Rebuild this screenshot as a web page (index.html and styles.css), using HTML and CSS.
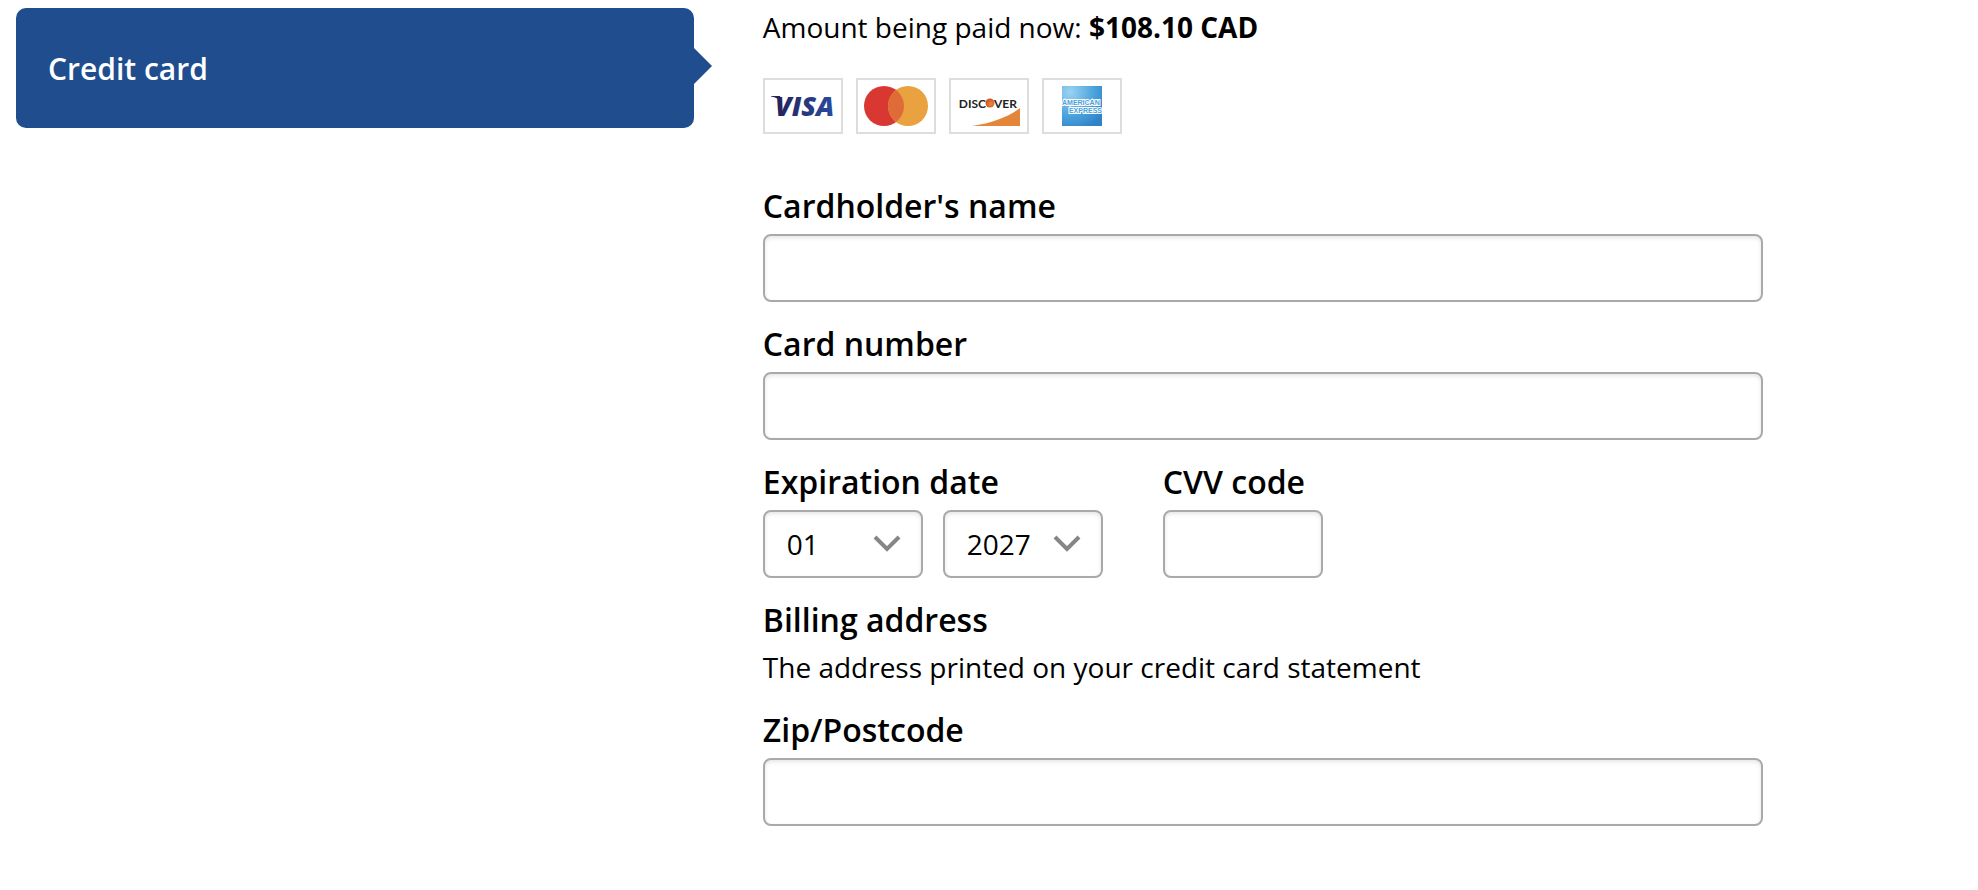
FILE: index.html
```
<!DOCTYPE html>
<html lang="en">
<head>
  <meta charset="UTF-8">
  <meta name="viewport" content="width=device-width, initial-scale=1">
  <title>Payment</title>
  <link rel="stylesheet" href="styles.css">
</head>
<body>
  <main class="payment">
    <nav class="methods">
      <button type="button" class="method-tab">Credit card</button>
    </nav>

    <form class="card-form">
      <p class="amount">Amount being paid now: <strong>$108.10 CAD</strong></p>

      <ul class="card-types">
        <li>
          <svg viewBox="0 0 76 52" role="img" aria-label="Visa">
            <defs>
              <linearGradient id="visaBlue" x1="0" y1="0" x2="1" y2="0">
                <stop offset="0" stop-color="#25215a"/>
                <stop offset="1" stop-color="#2a4b9f"/>
              </linearGradient>
            </defs>
            <path d="M6 16h9l2 6c-3-3-6-4.500-11-5.500z" fill="#25215a"/>
            <text x="10" y="36" class="visa-text" fill="url(#visaBlue)">VISA</text>
          </svg>
        </li>
        <li>
          <svg viewBox="0 0 76 52" role="img" aria-label="Mastercard">
            <circle cx="26" cy="26" r="20" fill="#d93832"/>
            <circle cx="50" cy="26" r="20" fill="#e9a23f"/>
            <path d="M38 10a20 20 0 0 1 0 32a20 20 0 0 1 0-32z" fill="#df6b38"/>
          </svg>
        </li>
        <li>
          <svg viewBox="0 0 76 52" role="img" aria-label="Discover">
            <defs>
              <radialGradient id="discoverDot" cx="0.6" cy="0.6" r="0.6">
                <stop offset="0" stop-color="#f08a36"/>
                <stop offset="1" stop-color="#cf4f27"/>
              </radialGradient>
            </defs>
            <text x="35" y="28" class="discover-text" text-anchor="end">DISC</text>
            <circle cx="39" cy="23" r="4.500" fill="url(#discoverDot)"/>
            <text x="43" y="28" class="discover-text">VER</text>
            <path d="M21 46c20-3 36-9 48-18v18z" fill="#e48639"/>
          </svg>
        </li>
        <li>
          <svg viewBox="0 0 76 52" role="img" aria-label="American Express">
            <defs>
              <radialGradient id="amexBlue" cx="0.2" cy="0.15" r="1">
                <stop offset="0" stop-color="#9bd3f2"/>
                <stop offset="0.6" stop-color="#4aa3dc"/>
                <stop offset="1" stop-color="#3181c6"/>
              </radialGradient>
            </defs>
            <rect x="18" y="6" width="40" height="40" fill="url(#amexBlue)"/>
            <text x="18" y="25" class="amex-text">AMERICAN</text>
            <text x="58" y="33" class="amex-text" text-anchor="end">EXPRESS</text>
          </svg>
        </li>
      </ul>

      <div class="field">
        <label for="cardName">Cardholder's name</label>
        <input type="text" id="cardName" autocomplete="cc-name">
      </div>

      <div class="field">
        <label for="cardNumber">Card number</label>
        <input type="text" id="cardNumber" inputmode="numeric" autocomplete="cc-number">
      </div>

      <div class="field-row">
        <div class="field">
          <label for="expMonth">Expiration date</label>
          <div class="expiry">
            <select id="expMonth">
              <option>01</option>
              <option>02</option>
              <option>03</option>
            </select>
            <select id="expYear" aria-label="Expiration year">
              <option>2027</option>
              <option>2028</option>
              <option>2029</option>
            </select>
          </div>
        </div>
        <div class="field cvv">
          <label for="cvv">CVV code</label>
          <input type="text" id="cvv" inputmode="numeric" maxlength="4">
        </div>
      </div>

      <h2>Billing address</h2>
      <p class="hint">The address printed on your credit card statement</p>

      <div class="field">
        <label for="zip">Zip/Postcode</label>
        <input type="text" id="zip" autocomplete="postal-code">
      </div>
    </form>
  </main>
</body>
</html>
```
FILE: styles.css
```
* {
  box-sizing: border-box;
}
body {
  margin: 0;
  font-family: "Open Sans", sans-serif;
  font-size: 28px;
  line-height: 38px;
  color: #000;
  background: #fff;
}
p, h2, ul {
  margin: 0;
}
.payment {
  display: grid;
  grid-template-columns: 13fr 23fr;
  column-gap: 69px;
  align-items: start;
  padding: 8px 16px;
}

/* Payment method tab */
.method-tab {
  position: relative;
  display: block;
  width: 100%;
  height: 120px;
  padding: 2px 32px 0;
  border: none;
  border-radius: 10px;
  background: #204d8d;
  color: #fff;
  font: 600 30px/40px "Open Sans", sans-serif;
  text-align: left;
  cursor: pointer;
}
.method-tab::after {
  content: "";
  position: absolute;
  top: 40px;
  left: 100%;
  border: 18px solid transparent;
  border-left-color: #204d8d;
  border-right-width: 0;
}

/* Accepted cards */
.card-types {
  display: flex;
  gap: 13px;
  margin: 32px 0 50px;
  padding: 0;
  list-style: none;
}
.card-types li {
  width: 80px;
  height: 56px;
  border: 2px solid #ddd;
}
.card-types svg {
  display: block;
}
.visa-text {
  font: italic 800 27px "Open Sans", sans-serif;
}
.discover-text {
  font: 700 12px Lato, sans-serif;
  fill: #222;
}
.amex-text {
  font: 700 7px "Liberation Sans", sans-serif;
  fill: #4a9fdb;
  stroke: #fff;
  stroke-width: 2px;
  paint-order: stroke;
}

/* Form */
.card-form {
  max-width: 1000px;
}
.field {
  margin-bottom: 20px;
}
label, h2 {
  display: block;
  margin-bottom: 6px;
  font-size: 32px;
  font-weight: 600;
  line-height: 44px;
}
input, select {
  display: block;
  width: 100%;
  height: 68px;
  padding: 0 22px;
  border: 2px solid #a9a9a9;
  border-radius: 8px;
  background-color: #fff;
  box-shadow: inset 0 2px 4px rgba(0, 0, 0, 0.1);
  color: #000;
  font: inherit;
}
.field-row {
  display: flex;
  gap: 60px;
}
.expiry {
  display: flex;
  gap: 20px;
}
.expiry select,
.cvv input {
  width: 160px;
}
select {
  appearance: none;
  background-image: url("data:image/svg+xml,%3Csvg xmlns='http://www.w3.org/2000/svg' width='28' height='18'%3E%3Cpath d='M2 2l12 12L26 2' fill='none' stroke='%23868686' stroke-width='4'/%3E%3C/svg%3E");
  background-repeat: no-repeat;
  background-position: right 20px center;
}
h2 {
  margin: 0;
}
.hint {
  margin: 6px 0 22px;
}
```
